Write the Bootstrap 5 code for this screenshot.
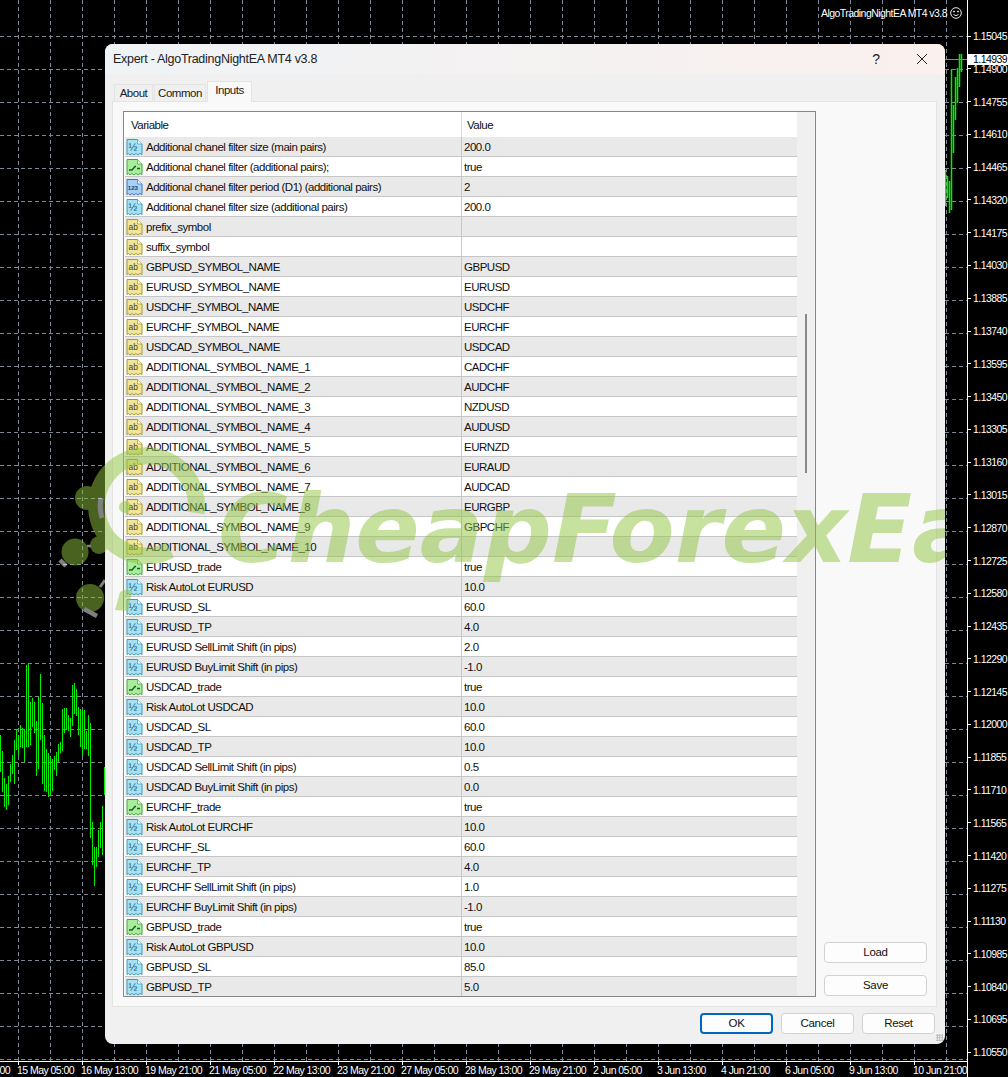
<!DOCTYPE html>
<html lang="en">
<head>
<meta charset="UTF-8">
<title>Expert - AlgoTradingNightEA MT4 v3.8</title>
<link rel="stylesheet" href="https://cdn.jsdelivr.net/npm/bootstrap@5.3.0/dist/css/bootstrap.min.css">
<style>
  html, body { margin: 0; background: #000; }
  body { font-family: "Liberation Sans", sans-serif; font-size: 11.5px; letter-spacing: -.48px; color: #111; }
  .desk { position: relative; width: 1008px; height: 1077px; overflow: hidden; background: #000; }
  .chart-svg { position: absolute; left: 0; top: 0; }
  .axis-text { font-family: "Liberation Sans", sans-serif; font-size: 10.5px; color: #fff; letter-spacing: -.55px; white-space: nowrap; }
  .price-axis { position: absolute; left: 967px; top: 0; width: 41px; height: 1077px; background: #000; border-left: 1px solid #fff; padding-top: 28px; }
  .price-row { height: 33.03px; line-height: 16px; padding-left: 5px; position: relative; }
  .price-row::before { content: ""; position: absolute; left: 0; top: 7.5px; width: 3px; height: 1px; background: #fff; }
  .price-now { position: absolute; left: 968px; top: 54px; width: 40px; height: 11px; background: #fff; color: #000; line-height: 11px; padding-left: 5px; }
  .date-axis { position: absolute; left: 0; top: 1061px; width: 967px; height: 16px; background: #000; border-top: 1px solid #fff; overflow: hidden; }
  .date-cell { flex: 0 0 64px; position: relative; padding: 2px 0 0 0; line-height: 13px; }
  .date-cell::before { content: ""; position: absolute; left: 1px; top: 0; width: 1px; height: 3px; background: #fff; }
  .date-shift { margin-left: -47px; }
  .ea-name { position: absolute; right: 61px; top: 6px; height: 14px; line-height: 14px; }
  .smile { position: absolute; left: 950px; top: 7px; }

  .dlg { position: absolute; left: 105px; top: 44px; width: 840px; height: 1000px; background: #f0f0f0; border-radius: 8px; overflow: hidden; }
  .dlg-title { height: 30px; background: linear-gradient(90deg, #eff3f5, #f5f1f1 60%, #faf0ed); padding: 0 0 0 8px; font-size: 12.5px; letter-spacing: -.28px; color: #222; }
  .dlg-q { width: 46px; text-align: center; font-size: 14px; }
  .dlg-x { width: 46px; text-align: center; }
  .tabbar { height: 27px; padding: 6px 0 0 9px; align-items: flex-end; position: relative; }
  .tabbar .nav-link { border: 1px solid #e4e4e4; border-bottom: 0; border-radius: 0; background: #f0f0f0; color: #1a1a1a; padding: 0; text-align: center; height: 17px; line-height: 17px; margin-right: 1px; font-size: 11.5px; }
  .tab-a { width: 39px; }
  .tab-b { width: 52px; }
  .tabbar .nav-link.tab-c { width: 45px; background: #f9f9f9; height: 21px; line-height: 17px; margin-top: -4px; position: relative; z-index: 2; margin-bottom: -1px; }
  .panel-box { margin: 0 8px 0 7px; height: 906px; background: #f9f9f9; border: 1px solid #e4e4e4; padding: 9px 9px 9px 10px; gap: 8px; }
  .list-box { width: 693px; height: 886px; border: 1px solid #878787; background: #fff; padding-left: 1px; overflow: hidden; }
  .list-main { width: 673px; }
  .list-head { height: 25px; line-height: 26px; background: #fff; }
  .list-head > div:first-child { width: 336px; padding-left: 6px; }
  .list-head > div:last-child { border-left: 1px solid #dcdcdc; padding-left: 5px; flex: 1; }
  .inp-table { table-layout: fixed; border-collapse: separate; border-spacing: 0; margin: 0; --bs-table-striped-bg: #e9e9e9; --bs-table-bg: #fff; --bs-table-color: #111; --bs-table-striped-color: #111; font-size: 11.5px; }
  .inp-table td { height: 20px; padding: 0; line-height: 19px; border-bottom: 1px solid #c6c6c6; white-space: nowrap; overflow: hidden; }
  .inp-table td:first-child { width: 336px; padding-left: 1px; }
  .inp-table td:last-child { border-left: 1px solid #c6c6c6; padding: 1px 0 0 2px; line-height: 18px; }
  .var-cell { gap: 3px; height: 19px; }
  .var-name { padding-top: 1px; line-height: 18px; }
  .var-icon { flex: 0 0 17px; width: 17px; height: 18px; }
  .scroll-col { width: 18px; background: #f0f0f0; position: relative; }
  .scroll-thumb { position: absolute; left: 8px; top: 202px; width: 2px; height: 159px; background: #8a8a8a; }
  .side-col { width: 103px; gap: 12px; padding-bottom: 1px; }
  .win-btn { height: 21px; padding: 0; background: #fdfdfd; border: 1px solid #d2d2d2; border-radius: 4px; font-size: 11.5px; letter-spacing: -.3px; color: #111; line-height: 19px; }
  .foot-bar { height: 36px; padding: 6px 10px 0 0; gap: 8px; position: relative; }
  .foot-bar .win-btn { width: 73px; }
  .win-btn.is-default { border: 2px solid #0067c0; line-height: 17px; }
  .grip { position: absolute; right: 2px; bottom: 2px; width: 7px; height: 7px; background: radial-gradient(circle, #b5b5b5 0 1px, transparent 1px) 0 0 / 2.5px 2.5px; }

  .watermark { position: absolute; left: 0; top: 440px; width: 945px; height: 180px; overflow: hidden; opacity: .5; pointer-events: none; }
  .wm-logo { position: absolute; left: 0; top: 0; }
  .wm-text { position: absolute; left: 218px; top: 34px; font-family: "DejaVu Sans", sans-serif; font-weight: 700; font-style: italic; font-size: 95px; line-height: 110px; letter-spacing: 0; color: #91c43f; white-space: nowrap; }
</style>
</head>
<body>
<svg width="0" height="0" class="d-block">
  <defs>
    <path id="tag" d="M1 1.500H11.500L16 6V16.500L14 15.500L12 17L10 15.500L8 17L6 15.500L4 17L2.500 15.500L1 16.500Z"/>
    <symbol id="i-dbl" viewBox="0 0 17 18">
      <use href="#tag" fill="#a6e2f2" stroke="#3b9dbd"/>
      <path d="M11.500 1.500V6H16" fill="#e8f8fc" stroke="#3b9dbd" stroke-width=".7"/>
      <text x="2.500" y="12.500" font-family="Liberation Sans" font-size="10.500" fill="#1d5a75">½</text>
    </symbol>
    <symbol id="i-bool" viewBox="0 0 17 18">
      <use href="#tag" fill="#a8ec9c" stroke="#3fa63b"/>
      <path d="M11.500 1.500V6H16" fill="#e2fadd" stroke="#3fa63b" stroke-width=".7"/>
      <path d="M3 12H6L9 8.500H10M11 10.500H14" fill="none" stroke="#14601a" stroke-width="1.300"/>
    </symbol>
    <symbol id="i-int" viewBox="0 0 17 18">
      <use href="#tag" fill="#a8cff4" stroke="#3a78c2"/>
      <path d="M11.500 1.500V6H16" fill="#e4f0fc" stroke="#3a78c2" stroke-width=".7"/>
      <text x="1.800" y="12" font-family="Liberation Sans" font-weight="700" font-size="6" letter-spacing="0" fill="#123c78">123</text>
    </symbol>
    <symbol id="i-str" viewBox="0 0 17 18">
      <use href="#tag" fill="#f1e59a" stroke="#a8992f"/>
      <path d="M11.500 1.500V6H16" fill="#fbf6d4" stroke="#a8992f" stroke-width=".7"/>
      <text x="2.500" y="12" font-family="Liberation Sans" font-size="8.500" letter-spacing="0" fill="#4a4210">ab</text>
    </symbol>
  </defs>
</svg>

<div class="desk">
  <svg id="chart" class="chart-svg" width="1008" height="1077">
    <g id="grid" stroke="#7d8796" stroke-width="1" stroke-dasharray="4 3" fill="none"></g>
    <path id="bars" stroke="#00f000" stroke-width="1" fill="none"></path>
    <path id="bars-now" stroke="#00f000" stroke-width="1.500" fill="none"></path>
    <path d="M945 59.500H968" stroke="#7d8796"></path>
  </svg>

  <div class="ea-name axis-text">AlgoTradingNightEA MT4 v3.8</div>
  <svg class="smile" width="12" height="12" viewBox="0 0 12 12" fill="none" stroke="#e8e8e8">
    <circle cx="6" cy="6" r="5.300"/>
    <circle cx="4" cy="4.500" r=".6" fill="#e8e8e8"/>
    <circle cx="8" cy="4.500" r=".6" fill="#e8e8e8"/>
    <path d="M3.500 7.500Q6 9.800 8.500 7.500"/>
  </svg>

  <div id="prices" class="price-axis axis-text d-flex flex-column"></div>
  <div class="price-now axis-text">1.14939</div>
  <div id="dates" class="date-axis axis-text d-flex"></div>

  <div class="dlg d-flex flex-column">
    <div class="dlg-title d-flex align-items-center">
      <div class="flex-grow-1">Expert - AlgoTradingNightEA MT4 v3.8</div>
      <div class="dlg-q">?</div>
      <div class="dlg-x">
        <svg width="12" height="12" viewBox="0 0 12 12" stroke="#222" fill="none"><path d="M1 1L11 11M11 1L1 11"/></svg>
      </div>
    </div>
    <ul class="nav tabbar">
      <li class="nav-item"><a class="nav-link tab-a" href="#">About</a></li>
      <li class="nav-item"><a class="nav-link tab-b" href="#">Common</a></li>
      <li class="nav-item"><a class="nav-link tab-c active" href="#">Inputs</a></li>
    </ul>
    <div class="panel-box d-flex">
      <div class="list-box d-flex">
        <div class="list-main">
          <div class="list-head d-flex"><div>Variable</div><div>Value</div></div>
          <table class="table table-striped inp-table"><tbody id="rows"></tbody></table>
        </div>
        <div class="scroll-col"><div class="scroll-thumb"></div></div>
      </div>
      <div class="side-col d-flex flex-column justify-content-end">
        <button class="btn win-btn">Load</button>
        <button class="btn win-btn">Save</button>
      </div>
    </div>
    <div class="foot-bar d-flex justify-content-end">
      <button class="btn win-btn is-default">OK</button>
      <button class="btn win-btn">Cancel</button>
      <button class="btn win-btn">Reset</button>
      <div class="grip"></div>
    </div>
  </div>

  <!-- watermark over the whole window -->
  <div class="watermark">
    <svg class="wm-logo" width="260" height="180" viewBox="0 0 260 180">
      <path d="M196 73A50 50 0 1 0 170 110" fill="none" stroke="#91c43f" stroke-width="17"/>
      <g fill="#91c43f">
        <circle cx="125" cy="67" r="6"/>
        <circle cx="87" cy="58" r="12"/>
        <circle cx="75" cy="112" r="13.500"/>
        <circle cx="99" cy="105" r="9"/>
        <circle cx="90" cy="158" r="14"/>
        <path d="M115 170L120 152Q126 148 132 151L128 171Z"/>
      </g>
      <g fill="none" stroke="#fff" stroke-width="4.500">
        <path d="M60 120L66 126"/>
        <path d="M84 169L97 176"/>
        <path d="M100 147L105 140" stroke-width="3"/>
        <path d="M87 106H91" stroke-width="2.500"/>
        <path d="M101 58Q99 68 102 78" stroke-width="5"/>
      </g>
    </svg>
    <div class="wm-text">CheapForexEa</div>
  </div>
</div>

<script src="https://cdn.jsdelivr.net/npm/bootstrap@5.3.0/dist/js/bootstrap.bundle.min.js"></script>
<script>
  // input rows: icon, name, value
  const rows = [
    ["dbl", "Additional chanel filter size (main pairs)", "200.0"],
    ["bool", "Additional chanel filter (additional pairs);", "true"],
    ["int", "Additional chanel filter period (D1) (additional pairs)", "2"],
    ["dbl", "Additional chanel filter size (additional pairs)", "200.0"],
    ["str", "prefix_symbol", ""],
    ["str", "suffix_symbol", ""],
    ["str", "GBPUSD_SYMBOL_NAME", "GBPUSD"],
    ["str", "EURUSD_SYMBOL_NAME", "EURUSD"],
    ["str", "USDCHF_SYMBOL_NAME", "USDCHF"],
    ["str", "EURCHF_SYMBOL_NAME", "EURCHF"],
    ["str", "USDCAD_SYMBOL_NAME", "USDCAD"],
    ["str", "ADDITIONAL_SYMBOL_NAME_1", "CADCHF"],
    ["str", "ADDITIONAL_SYMBOL_NAME_2", "AUDCHF"],
    ["str", "ADDITIONAL_SYMBOL_NAME_3", "NZDUSD"],
    ["str", "ADDITIONAL_SYMBOL_NAME_4", "AUDUSD"],
    ["str", "ADDITIONAL_SYMBOL_NAME_5", "EURNZD"],
    ["str", "ADDITIONAL_SYMBOL_NAME_6", "EURAUD"],
    ["str", "ADDITIONAL_SYMBOL_NAME_7", "AUDCAD"],
    ["str", "ADDITIONAL_SYMBOL_NAME_8", "EURGBP"],
    ["str", "ADDITIONAL_SYMBOL_NAME_9", "GBPCHF"],
    ["str", "ADDITIONAL_SYMBOL_NAME_10", ""],
    ["bool", "EURUSD_trade", "true"],
    ["dbl", "Risk AutoLot EURUSD", "10.0"],
    ["dbl", "EURUSD_SL", "60.0"],
    ["dbl", "EURUSD_TP", "4.0"],
    ["dbl", "EURUSD SellLimit Shift (in pips)", "2.0"],
    ["dbl", "EURUSD BuyLimit Shift (in pips)", "-1.0"],
    ["bool", "USDCAD_trade", "true"],
    ["dbl", "Risk AutoLot USDCAD", "10.0"],
    ["dbl", "USDCAD_SL", "60.0"],
    ["dbl", "USDCAD_TP", "10.0"],
    ["dbl", "USDCAD SellLimit Shift (in pips)", "0.5"],
    ["dbl", "USDCAD BuyLimit Shift (in pips)", "0.0"],
    ["bool", "EURCHF_trade", "true"],
    ["dbl", "Risk AutoLot EURCHF", "10.0"],
    ["dbl", "EURCHF_SL", "60.0"],
    ["dbl", "EURCHF_TP", "4.0"],
    ["dbl", "EURCHF SellLimit Shift (in pips)", "1.0"],
    ["dbl", "EURCHF BuyLimit Shift (in pips)", "-1.0"],
    ["bool", "GBPUSD_trade", "true"],
    ["dbl", "Risk AutoLot GBPUSD", "10.0"],
    ["dbl", "GBPUSD_SL", "85.0"],
    ["dbl", "GBPUSD_TP", "5.0"]
  ];
  document.getElementById("rows").innerHTML = rows.map(r =>
    `<tr><td><div class="var-cell d-flex align-items-center"><svg class="var-icon"><use href="#i-${r[0]}"/></svg><span class="var-name">${r[1]}</span></div></td><td>${r[2]}</td></tr>`
  ).join("");

  // price scale
  const prices = ["1.15045","1.14900","1.14755","1.14610","1.14465","1.14320","1.14175","1.14030","1.13885","1.13740","1.13595","1.13450","1.13305","1.13160","1.13015","1.12870","1.12725","1.12580","1.12435","1.12290","1.12145","1.12000","1.11855","1.11710","1.11565","1.11420","1.11275","1.11130","1.10985","1.10840","1.10695","1.10550"];
  document.getElementById("prices").innerHTML = prices.map(p => `<div class="price-row">${p}</div>`).join("");

  // time scale
  const dates = ["14 May 21:00","15 May 05:00","16 May 13:00","19 May 21:00","21 May 05:00","22 May 13:00","23 May 21:00","27 May 05:00","28 May 13:00","29 May 21:00","2 Jun 05:00","3 Jun 13:00","4 Jun 21:00","6 Jun 05:00","9 Jun 13:00","10 Jun 21:00"];
  document.getElementById("dates").innerHTML = dates.map((d, i) =>
    `<div class="date-cell ${i == 0 ? "date-shift" : ""}">${d}</div>`
  ).join("");

  // grid lines
  let grid = "";
  for (let x = 18; x < 967; x += 32) grid += `<path d="M${x + .5} 0V1061"/>`;
  for (let i = 0; i < 32; i++) {
    const y = Math.round(35.5 + i * 33.03) + .5;
    grid += `<path d="M0 ${y}H967"/>`;
  }
  document.getElementById("grid").innerHTML = grid;

  // candles, [y top, y bottom] at 2px steps from x=0
  const left = [[735,772],[751,792],[778,807],[784,810],[776,805],[764,782],[755,774],[740,784],[729,750],[735,756],[725,747],[728,748],[730,762],[665,747],[664,747],[702,745],[698,727],[702,733],[721,776],[697,769],[674,740],[703,784],[735,791],[749,792],[753,797],[757,795],[759,791],[756,770],[752,776],[744,762],[742,753],[709,751],[708,733],[708,730],[715,731],[718,737],[685,726],[683,714],[689,716],[707,735],[709,747],[710,756],[710,749],[731,749],[715,756],[723,838],[822,865],[847,886],[847,867],[830,857],[822,848],[806,855],[767,795]];
  let d = "";
  left.forEach((b, i) => { d += `M${i * 2 + .5} ${b[0]}V${b[1]}`; });
  document.getElementById("bars").setAttribute("d", d);
  const right = [[945,170,206],[947,176,198],[949,181,213],[951,69,210],[953,105,153],[955,77,120],[957,68,103],[959,54,87],[961,54,72]];
  document.getElementById("bars-now").setAttribute("d", right.map(b => `M${b[0] + .5} ${b[1]}V${b[2]}`).join(""));
</script>
</body>
</html>
